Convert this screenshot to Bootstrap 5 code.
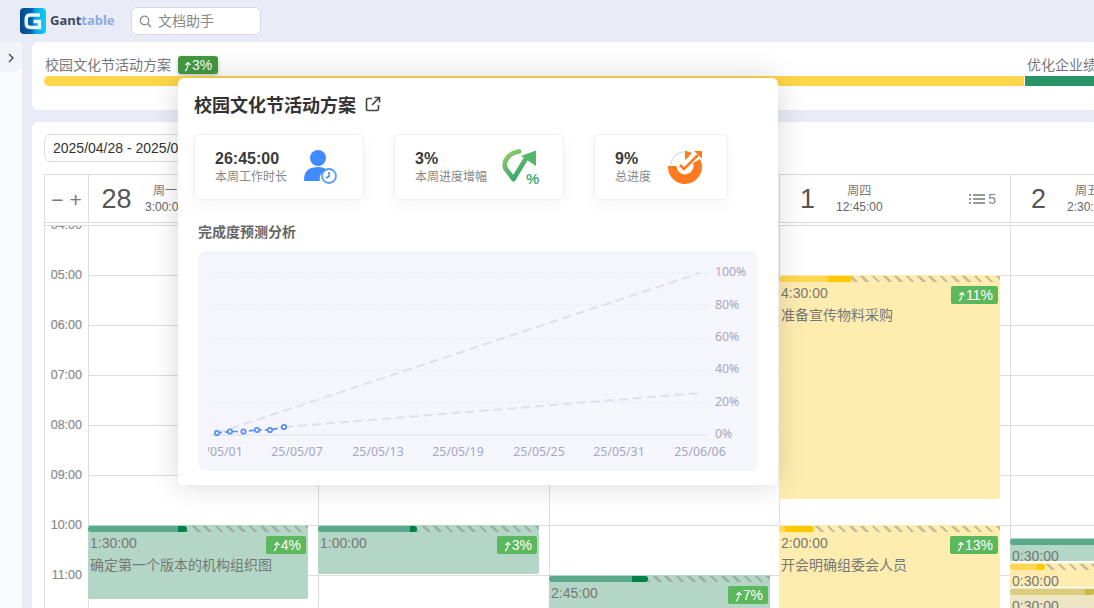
<!DOCTYPE html>
<html lang="zh">
<head>
<meta charset="utf-8">
<title>Ganttable</title>
<link href="https://cdn.jsdelivr.net/npm/bootstrap@5.3.0/dist/css/bootstrap.min.css" rel="stylesheet">
<style>
html,body{height:608px;overflow:hidden}
body{background:#e9ecf6;font-family:"Liberation Sans","Noto Sans CJK SC",sans-serif;color:#666;font-size:14px}
.topbar{height:42px;padding-left:20px}
.brand{font-size:13px;font-weight:700;color:#3b4760;margin-left:4px;width:81px;font-family:"Noto Sans","Liberation Sans",sans-serif}
.brand span{color:#8fabdf}
.searchbox{width:130px;height:28px;background:#fff;border:1px solid #d6d8e2;border-radius:6px;padding-left:7px;color:#888;font-size:14px;gap:6px}
.mainwrap{height:566px}
.sidebar{width:22px;background:#fafbfe;flex:none}
.toggler{height:30px;background:#f3f4f9;border-bottom-right-radius:8px;padding-top:1px}
.content{margin-left:10px;flex:1;min-width:0;gap:12px}
.panel-top{height:68px;background:#fff;border-radius:6px 0 0 6px;padding:12px 0 0 12px;overflow:hidden}
.tline{height:22px;line-height:22px;color:#777;font-size:14px}
.tname{width:983px;flex:none;padding-left:1px}
.tbadge{background:#43983f;color:#fff;border-radius:3px;height:18px;line-height:18px;padding:0 4px 0 5px;font-size:14px;margin:2px 0 0 7px;width:40px;box-shadow:0 2px 4px rgba(0,0,0,.2);white-space:nowrap}
.tbars{height:10px;gap:1px}
.ybar{width:980px;background:#ffd54a;border-radius:5px 0 0 5px;flex:none}
.gbar{flex:1;background:#2a9468}
.panel-cal{flex:1;background:#fff;border-radius:6px 0 0 0;padding:12px 0 0 12px;min-height:0}
.datebox{width:300px;height:28px;border:1px solid #ddd;border-radius:7px;padding-left:8px;line-height:26px;color:#333;font-size:14px;white-space:nowrap;margin-bottom:12px}
.calgrid{display:grid;grid-template-columns:44px 230px 231px 230px 231px 1fr;border-top:1px solid #ddd;border-left:1px solid #ddd;height:434px;overflow:hidden}
.hcell{height:48px;border-right:1px solid #ddd;border-bottom:1px solid #ddd;margin-bottom:2px;position:relative;box-shadow:0 2px 0 #fff,0 3px 0 #ddd;padding-top:1px}
.zoomers{font-size:21px;color:#777;gap:6px;line-height:1}
.daynum{font-size:27px;color:#555;width:55px;text-align:center;flex:none;line-height:1}
.dayinfo{font-size:12px;color:#666;line-height:16px;text-align:center;margin-left:1px}
.dayinfo div:first-child{color:#777}
.dcount{margin-left:auto;margin-right:14px;font-size:14px;color:#888;gap:3px}
.timecol{border-right:1px solid #ddd;overflow:hidden;height:384px}
.tlist{margin-top:-9px}
.tlabel{height:50px;line-height:18px;text-align:right;padding-right:6px;font-size:12.5px;color:#8a8a8a;-webkit-text-stroke:.2px #8a8a8a}
.daycol{position:relative;border-right:1px solid #ddd;height:384px;background:repeating-linear-gradient(to bottom,#ddd 0,#ddd 1px,#fff 1px,#fff 50px)}
.evt{position:absolute;overflow:hidden;border-radius:0 0 2px 2px;color:#777;line-height:1}
.evt-g{background:#b3d6c6;--b:#5aa98a;--d:#02824b}
.evt-y{background:#ffedb0;--b:#ffd751;--d:#ffc800}
.evt-k{background:#ece6c4;--b:#dccd7e;--d:#ccb846}
.evbar{height:6px;margin-top:1px;background:repeating-linear-gradient(45deg,transparent 0,transparent 5.5px,rgba(120,120,120,.4) 5.5px,rgba(120,120,120,.4) 8px)}
.evfill{height:6px;background:var(--b);border-radius:3px;position:relative;overflow:hidden}
.evdark{position:absolute;right:0;top:0;bottom:0;background:var(--d)}
.evtime{font-size:14px;padding:3px 0 0 2px;line-height:16px;height:22px}
.evname{font-size:14px;padding-left:2px;line-height:22px;white-space:nowrap}
.evbadge{position:absolute;right:2px;top:11px;height:18px;line-height:18px;background:#5cb85c;color:#fff;border-radius:2px;font-size:14px;padding:0 5px 0 6px;white-space:nowrap}
.popbox{position:absolute;left:178px;top:78px;width:600px;height:407px;background:#fff;border-radius:6px;box-shadow:0 0 30px rgba(0,0,0,.16);padding:16px;z-index:10}
.poptitle{font-size:18px;font-weight:700;color:#333;line-height:20px;gap:9px;font-family:"Noto Sans CJK SC",sans-serif}
.statrow{gap:30px;margin-top:20px}
.statcard{width:170px;height:66px;border:1px solid #eef0f8;border-radius:6px;padding-left:20px;box-shadow:0 4px 14px rgba(60,70,120,.05)}
.statcard.narrow{width:134px}
.statval{font-size:16px;font-weight:700;color:#3a3a3a;line-height:20px}
.statlab{font-size:12px;color:#888;line-height:16px}
.stattext{width:88px;flex:none}
.wide-icon .stattext{width:87px}
.narrow .stattext{width:52px}
.sechead{font-size:14px;font-weight:700;color:#666;margin:21px 0 0 4px;line-height:20px;font-family:"Noto Sans CJK SC",sans-serif}
.chartbox{margin:10px 4px 0;height:220px;background:#f5f6fb;border-radius:8px;overflow:hidden}
.chartbox svg{display:block}
.chartbox text{font-family:"Noto Sans",sans-serif;font-size:12.3px;fill:#a3a7c0}
</style>
</head>
<body>
<header class="topbar d-flex align-items-center">
  <svg width="26" height="26" viewBox="0 0 26 26" aria-hidden="true">
    <defs><linearGradient id="lg" x1="0" x2="1" y1="0" y2="0"><stop offset="0" stop-color="#02478a"/><stop offset=".45" stop-color="#0464ac"/><stop offset=".6" stop-color="#08a6e4"/><stop offset="1" stop-color="#10cdf6"/></linearGradient></defs>
    <rect width="26" height="26" rx="4" fill="url(#lg)"/>
    <path d="M20 7H10.500Q6.200 7 6.200 11.200V15.300Q6.200 19.500 10.500 19.500H19.500V13.500H13.500" fill="none" stroke="#eaf6fc" stroke-width="3.400"/>
  </svg>
  <div class="brand">Gant<span>table</span></div>
  <div class="searchbox d-flex align-items-center">
    <svg width="13" height="13" viewBox="0 0 13 13" aria-hidden="true"><circle cx="5.500" cy="5.500" r="4.300" fill="none" stroke="#888" stroke-width="1.200"/><path d="M8.700 8.700L12 12" stroke="#888" stroke-width="1.300"/></svg>
    <span>文档助手</span>
  </div>
</header>
<div class="mainwrap d-flex">
  <aside class="sidebar">
    <div class="toggler d-flex align-items-center justify-content-center">
      <svg width="8" height="10" viewBox="0 0 8 10" aria-hidden="true"><path d="M2 1l4 4-4 4" fill="none" stroke="#444" stroke-width="1.300"/></svg>
    </div>
  </aside>
  <main class="content d-flex flex-column">
    <section class="panel-top">
      <div class="d-flex tline">
        <div class="d-flex tname"><span>校园文化节活动方案</span>
          <span class="tbadge"><svg width="9" height="11" viewBox="0 0 9 11" aria-hidden="true"><path d="M2 10Q5 8 5 2M2.500 4L5 1.500 7.500 4" fill="none" stroke="#fff" stroke-width="1.200"/></svg>3%</span>
        </div>
        <span class="text-nowrap">优化企业绩效</span>
      </div>
      <div class="tbars d-flex"><div class="ybar"></div><div class="gbar"></div></div>
    </section>
    <section class="panel-cal d-flex flex-column">
      <div class="datebox">2025/04/28 - 2025/05/04</div>
      <div class="calgrid">
        <div class="hcell d-flex align-items-center justify-content-center zoomers"><span>−</span><span>+</span></div>
        <div class="hcell d-flex align-items-center"><div class="daynum">28</div><div class="dayinfo"><div>周一</div><div>3:00:00</div></div></div>
        <div class="hcell d-flex align-items-center"><div class="daynum">29</div><div class="dayinfo"><div>周二</div><div>2:30:00</div></div></div>
        <div class="hcell d-flex align-items-center"><div class="daynum">30</div><div class="dayinfo"><div>周三</div><div>4:00:00</div></div></div>
        <div class="hcell d-flex align-items-center"><div class="daynum">1</div><div class="dayinfo"><div>周四</div><div>12:45:00</div></div>
          <div class="dcount d-flex align-items-center"><svg width="16" height="12" viewBox="0 0 16 12" aria-hidden="true"><path d="M0 2h2M4 2h12M0 6h2M4 6h12M0 10h2M4 10h12" stroke="#777" stroke-width="1.300"/></svg><span>5</span></div></div>
        <div class="hcell d-flex align-items-center border-end-0"><div class="daynum">2</div><div class="dayinfo"><div>周五</div><div>2:30:00</div></div></div>

        <div class="timecol"><div class="tlist">
          <div class="tlabel">04:00</div><div class="tlabel">05:00</div><div class="tlabel">06:00</div><div class="tlabel">07:00</div><div class="tlabel">08:00</div><div class="tlabel">09:00</div><div class="tlabel">10:00</div><div class="tlabel">11:00</div>
        </div></div>
        <div class="daycol">
          <div class="evt evt-g" style="left:-1px;top:300px;width:220px;height:74px">
            <div class="evbar"><div class="evfill" style="width:99px"><div class="evdark" style="width:9px"></div></div></div>
            <div class="evtime">1:30:00</div><div class="evname">确定第一个版本的机构组织图</div>
            <div class="evbadge"><svg width="9" height="11" viewBox="0 0 9 11" aria-hidden="true"><path d="M2 10Q5 8 5 2M2.500 4L5 1.500 7.500 4" fill="none" stroke="#fff" stroke-width="1.200"/></svg>4%</div>
          </div>
        </div>
        <div class="daycol">
          <div class="evt evt-g" style="left:-1px;top:300px;width:221px;height:49px">
            <div class="evbar"><div class="evfill" style="width:99px"><div class="evdark" style="width:7px"></div></div></div>
            <div class="evtime">1:00:00</div>
            <div class="evbadge"><svg width="9" height="11" viewBox="0 0 9 11" aria-hidden="true"><path d="M2 10Q5 8 5 2M2.500 4L5 1.500 7.500 4" fill="none" stroke="#fff" stroke-width="1.200"/></svg>3%</div>
          </div>
        </div>
        <div class="daycol">
          <div class="evt evt-g" style="left:-1px;top:350px;width:221px;height:60px">
            <div class="evbar"><div class="evfill" style="width:99px"><div class="evdark" style="width:16px"></div></div></div>
            <div class="evtime">2:45:00</div>
            <div class="evbadge"><svg width="9" height="11" viewBox="0 0 9 11" aria-hidden="true"><path d="M2 10Q5 8 5 2M2.500 4L5 1.500 7.500 4" fill="none" stroke="#fff" stroke-width="1.200"/></svg>7%</div>
          </div>
        </div>
        <div class="daycol">
          <div class="evt evt-y" style="left:-1px;top:50px;width:221px;height:224px">
            <div class="evbar"><div class="evfill" style="width:73px"><div class="evdark" style="width:24px"></div></div></div>
            <div class="evtime">4:30:00</div><div class="evname">准备宣传物料采购</div>
            <div class="evbadge"><svg width="9" height="11" viewBox="0 0 9 11" aria-hidden="true"><path d="M2 10Q5 8 5 2M2.500 4L5 1.500 7.500 4" fill="none" stroke="#fff" stroke-width="1.200"/></svg>11%</div>
          </div>
          <div class="evt evt-y" style="left:-1px;top:300px;width:221px;height:100px">
            <div class="evbar"><div class="evfill" style="width:35px"><div class="evdark" style="width:29px"></div></div></div>
            <div class="evtime">2:00:00</div><div class="evname">开会明确组委会人员</div>
            <div class="evbadge"><svg width="9" height="11" viewBox="0 0 9 11" aria-hidden="true"><path d="M2 10Q5 8 5 2M2.500 4L5 1.500 7.500 4" fill="none" stroke="#fff" stroke-width="1.200"/></svg>13%</div>
          </div>
        </div>
        <div class="daycol border-end-0">
          <div class="evt evt-g" style="left:-1px;top:313px;width:90px;height:23px">
            <div class="evbar"><div class="evfill" style="width:90px"></div></div><div class="evtime">0:30:00</div>
          </div>
          <div class="evt evt-y" style="left:-1px;top:338px;width:90px;height:24px">
            <div class="evbar"><div class="evfill" style="width:35px"><div class="evdark" style="width:8px"></div></div></div><div class="evtime">0:30:00</div>
          </div>
          <div class="evt evt-k" style="left:-1px;top:363px;width:90px;height:24px">
            <div class="evbar"><div class="evfill" style="width:84px"><div class="evdark" style="width:9px"></div></div></div><div class="evtime">0:30:00</div>
          </div>
        </div>
      </div>
    </section>
  </main>
</div>

<div class="popbox">
  <div class="poptitle d-flex align-items-center">校园文化节活动方案
    <svg width="16" height="16" viewBox="0 0 16 16" aria-hidden="true"><path d="M7 2.500H3a1.500 1.500 0 0 0-1.500 1.500v9A1.500 1.500 0 0 0 3 14.500h9a1.500 1.500 0 0 0 1.500-1.500V9M9.500 1.500h5v5M14.500 1.500L7 9" fill="none" stroke="#444" stroke-width="1.600"/></svg>
  </div>
  <div class="statrow d-flex">
    <div class="statcard d-flex align-items-center">
      <div class="stattext"><div class="statval">26:45:00</div><div class="statlab">本周工作时长</div></div>
      <svg width="34" height="34" viewBox="0 0 34 34" aria-hidden="true">
        <circle cx="15" cy="8" r="8" fill="#3f8cff"/><path d="M1 30c0-10 6-13 14-13 4 0 7 1 9 3-6 2-8 6-7 11H2.500Q1 31 1 30z" fill="#3f8cff"/>
        <circle cx="26" cy="26" r="7" fill="#fff" stroke="#5b9cff" stroke-width="1.800"/><path d="M26 22v4.500l-3 1.500" fill="none" stroke="#3f8cff" stroke-width="1.500"/>
      </svg>
    </div>
    <div class="statcard wide-icon d-flex align-items-center">
      <div class="stattext"><div class="statval">3%</div><div class="statlab">本周进度增幅</div></div>
      <svg width="38" height="38" viewBox="0 0 38 38" aria-hidden="true">
        <defs><linearGradient id="gg" x1="0" x2=".6" y1="0" y2="1"><stop offset="0" stop-color="#98d06c"/><stop offset="1" stop-color="#35a56c"/></linearGradient></defs>
        <path d="M17 3.500C7 5 .5 13 3.500 20.500L11.500 31L23 12" fill="none" stroke="url(#gg)" stroke-width="4.800" stroke-linecap="round" stroke-linejoin="round"/>
        <path d="M19 8L34 2.500V18Z" fill="#55b66a"/>
        <text x="24" y="36" font-size="15" font-weight="700" fill="#4cb07a" font-family="Liberation Sans">%</text>
      </svg>
    </div>
    <div class="statcard narrow d-flex align-items-center">
      <div class="stattext"><div class="statval">9%</div><div class="statlab">总进度</div></div>
      <svg width="36" height="36" viewBox="0 0 36 36" aria-hidden="true">
        <path d="M3.500 17A14.500 14.500 0 0 1 17 3" fill="none" stroke="#e2e2e2" stroke-width="1.500"/>
        <path d="M1 17H9.500A8.500 8.500 0 1 0 26 14L33 10A17 17 0 1 1 1 17Z" fill="#ff7a1f"/>
        <path d="M18 1.500L25 4 19 10.500H18Z" fill="#ff7a1f"/>
        <path d="M13 16l4 4 14-14" fill="none" stroke="#ff7a1f" stroke-width="2.600"/>
        <path d="M27 2h8v7.500z" fill="#ff7a1f"/>
      </svg>
    </div>
  </div>
  <div class="sechead">完成度预测分析</div>
  <div class="chartbox">
    <svg width="560" height="220" viewBox="198 251 560 220">
      <defs><clipPath id="xclip"><rect x="208" y="440" width="100" height="25"/></clipPath></defs>
      <g stroke="#dcdfec" stroke-dasharray="1 2" stroke-width="1">
        <path d="M210 273H707M210 305H707M210 338H707M210 370H707M210 402H707"/>
      </g>
      <path d="M210 435H707" stroke="#dcdde8"/>
      <g fill="none" stroke="#dde0ee" stroke-width="2" stroke-dasharray="9 5">
        <path d="M217 433L700 273"/><path d="M284 427L700 393"/>
      </g>
      <path d="M217 433L230 431.500L243.500 431.500L257 430L270 430L284 427" fill="none" stroke="#5b8ff9" stroke-width="1.600" stroke-dasharray="5 3"/>
      <g fill="#fff" stroke="#5b8ff9" stroke-width="1.800">
        <circle cx="217" cy="433" r="2.200"/><circle cx="230" cy="431.500" r="2.200"/><circle cx="243.500" cy="431.500" r="2.200"/><circle cx="257" cy="430" r="2.200"/><circle cx="270" cy="430" r="2.200"/><circle cx="284" cy="427" r="2.200"/>
      </g>
      <g>
        <text x="715" y="276">100%</text><text x="715" y="309">80%</text><text x="715" y="341">60%</text><text x="715" y="373">40%</text><text x="715" y="406">20%</text><text x="715" y="438">0%</text>
      </g>
      <g text-anchor="middle">
        <text x="217" y="456" clip-path="url(#xclip)">25/05/01</text>
        <text x="297" y="456">25/05/07</text><text x="378" y="456">25/05/13</text><text x="458" y="456">25/05/19</text><text x="539" y="456">25/05/25</text><text x="619" y="456">25/05/31</text><text x="700" y="456">25/06/06</text>
      </g>
    </svg>
  </div>
</div>
<script src="https://cdn.jsdelivr.net/npm/bootstrap@5.3.0/dist/js/bootstrap.bundle.min.js"></script>
</body>
</html>
